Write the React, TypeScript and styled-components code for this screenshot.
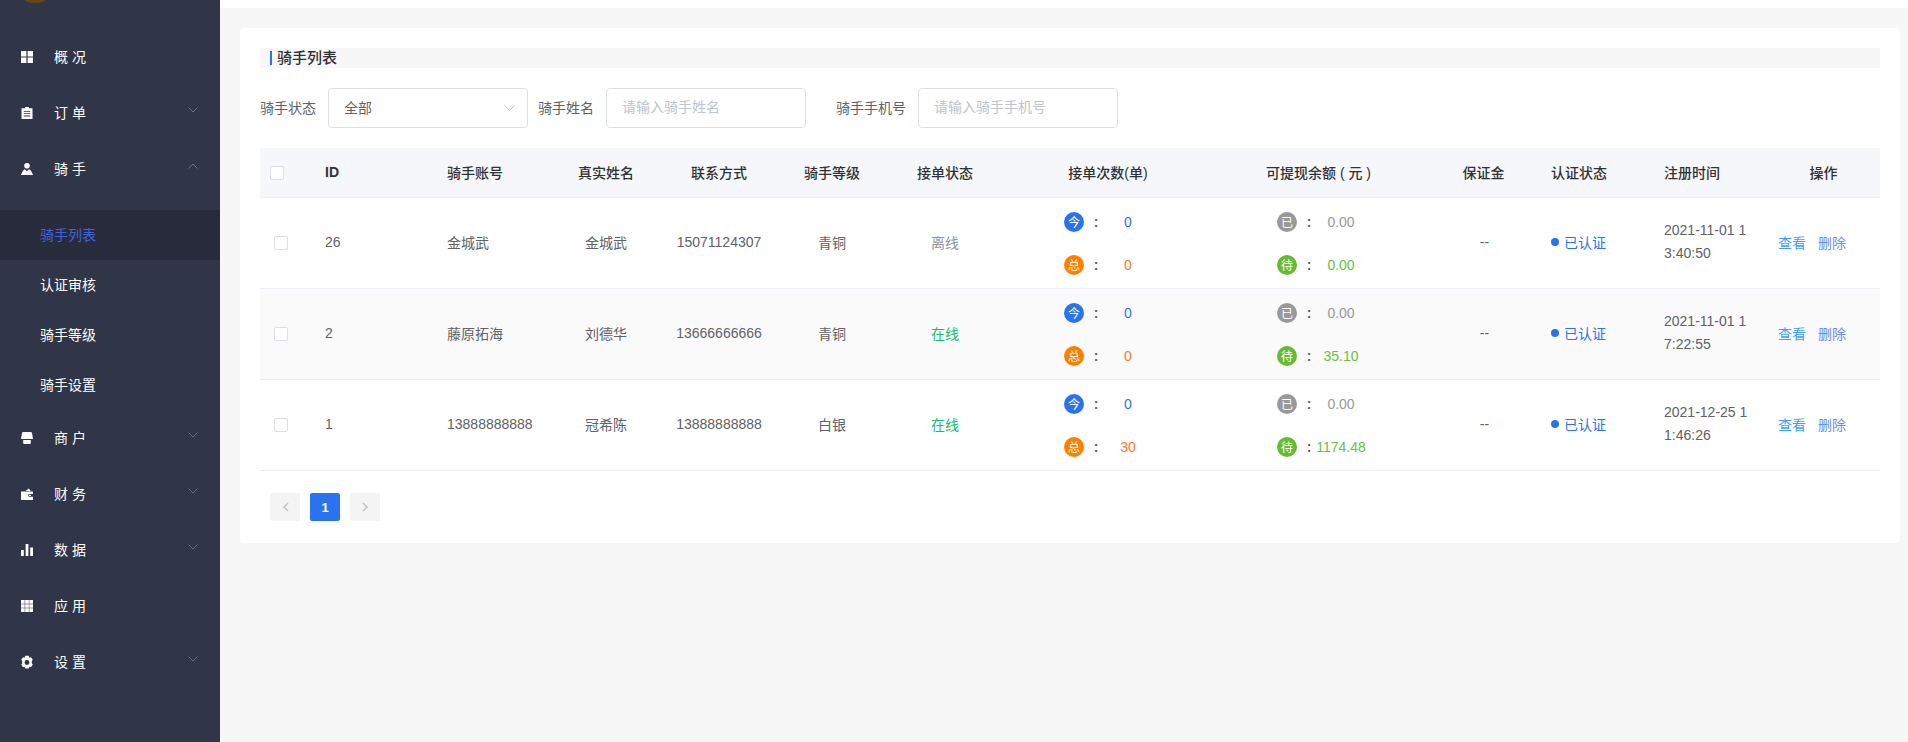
import React from 'react';
import styled, { createGlobalStyle } from 'styled-components';

const FONT = `"Liberation Sans", "Noto Sans CJK SC", sans-serif`;

const GlobalStyle = createGlobalStyle`
    html, body {
        margin: 0;
        padding: 0;
        height: 100%;
        overflow: hidden;
        background: #f7f7f7;
        font-family: ${FONT};
    }
    * {
        box-sizing: border-box;
    }
`;

const Layout = styled.div`
    display: flex;
    width: 100%;
    height: 742px;
    overflow: hidden;
`;

const Sidebar = styled.aside`
    flex: 0 0 220px;
    height: 100%;
    background-color: #303548;
    overflow: hidden;
`;

const LogoClip = styled.div`
    height: 29px;
    padding-left: 25px;
`;

const Logo = styled.div`
    width: 20px;
    height: 3px;
    border-radius: 0 0 50% 50% / 0 0 100% 100%;
    background-color: #65490f;
`;

const MenuItem = styled.div`
    height: 56px;
    padding: 0 22px 0 21px;
    display: flex;
    align-items: center;
    color: #ffffff;
    font-size: 14px;
`;

const MenuIcon = styled.svg`
    flex: 0 0 12px;
    width: 12px;
    height: 12px;
    margin-right: 21px;
    overflow: visible;
    fill: #ffffff;
`;

const MenuLabel = styled.span`
    flex: 1;
    padding-bottom: 2px;
`;

const Chevron = styled.svg<{ $open?: boolean }>`
    width: 10px;
    height: 6px;
    margin-top: -6px;
    fill: none;
    stroke: #6c7080;
    stroke-width: 1;
    transform: ${(props) => (props.$open ? 'rotate(180deg)' : 'none')};
`;

const SubMenu = styled.div`
    padding-top: 13px;
`;

const SubItem = styled.div<{ $active?: boolean }>`
    height: 50px;
    padding: 0 0 2px 40px;
    display: flex;
    align-items: center;
    font-size: 14px;
    color: ${(props) => (props.$active ? '#3f63d8' : '#ffffff')};
    background-color: ${(props) => (props.$active ? '#282b3b' : 'transparent')};
`;

const Main = styled.main`
    flex: 1;
    min-width: 0;
`;

const TopBar = styled.div`
    height: 8px;
    background-color: #ffffff;
`;

const Content = styled.div`
    padding: 20px 8px 0 20px;
`;

const Card = styled.section`
    background-color: #ffffff;
    border-radius: 4px;
    padding: 20px 20px 22px;
`;

const TitleBar = styled.div`
    height: 20px;
    padding-left: 10px;
    margin-bottom: 20px;
    display: flex;
    align-items: center;
    background-color: #f7f7f7;
`;

const TitleText = styled.h4`
    margin: 0;
    padding-left: 5px;
    border-left: 2px solid #2a73ee;
    height: 14px;
    font-size: 15px;
    line-height: 14px;
    font-weight: 500;
    color: #303133;
`;

const FilterRow = styled.div`
    height: 40px;
    margin-bottom: 20px;
    display: flex;
    align-items: center;
`;

const FilterLabel = styled.label<{ $gap?: number }>`
    margin-left: ${(props) => props.$gap ?? 0}px;
    margin-right: 12px;
    padding-bottom: 2px;
    font-size: 14px;
    color: #606266;
`;

const SelectBox = styled.div`
    width: 200px;
    height: 40px;
    padding: 0 12px 2px 15px;
    display: flex;
    align-items: center;
    justify-content: space-between;
    border: 1px solid #dcdfe6;
    border-radius: 4px;
    font-size: 14px;
    color: #606266;
`;

const SelectArrow = styled.svg`
    width: 11px;
    height: 7px;
    margin-top: 2px;
    fill: none;
    stroke: #c0c4cc;
    stroke-width: 1;
`;

const TextInput = styled.input`
    width: 200px;
    height: 40px;
    padding: 0 15px 2px;
    border: 1px solid #dcdfe6;
    border-radius: 4px;
    outline: none;
    font-family: ${FONT};
    font-size: 14px;
    color: #606266;

    &::placeholder {
        color: #c0c4cc;
    }
`;

const Table = styled.table`
    width: 1620px;
    table-layout: fixed;
    border-collapse: separate;
    border-spacing: 0;
    font-size: 14px;
    color: #606266;
`;

const HeadCell = styled.th<{ $left?: boolean; $nudge?: number }>`
    box-sizing: border-box;
    height: 50px;
    padding: 0 ${(props) => 10 + (props.$nudge ?? 0)}px 2px 10px;
    background-color: #f5f7fa;
    border-bottom: 1px solid #ebeef5;
    text-align: ${(props) => (props.$left ? 'left' : 'center')};
    font-size: 14px;
    font-weight: 500;
    color: #303133;
`;

const CheckHeadCell = styled(HeadCell)`
    padding-bottom: 0;
`;

const Row = styled.tr<{ $striped?: boolean }>`
    background-color: ${(props) => (props.$striped ? '#fafafa' : '#ffffff')};
`;

const Cell = styled.td<{ $left?: boolean }>`
    box-sizing: border-box;
    height: 91px;
    padding: 0 10px 2px;
    border-bottom: 1px solid #ebeef5;
    text-align: ${(props) => (props.$left ? 'left' : 'center')};
`;

const StatCell = styled(Cell)`
    padding-bottom: 0;
`;

const BondCell = styled(Cell)`
    padding-left: 12px;
`;

const IdText = styled.span`
    font-weight: 700;
`;

const CheckBox = styled.span<{ $inset?: boolean }>`
    display: block;
    width: 14px;
    height: 14px;
    margin-left: ${(props) => (props.$inset ? 4 : 0)}px;
    background-color: #ffffff;
    border: 1px solid #dcdfe6;
    border-radius: 2px;
`;

const OnlineState = styled.span<{ $online: boolean }>`
    color: ${(props) => (props.$online ? '#19be6b' : '#909399')};
`;

const StatList = styled.div<{ $indent: number }>`
    display: flex;
    flex-direction: column;
    gap: 23px;
    margin-left: ${(props) => props.$indent}px;
`;

const StatLine = styled.div`
    display: flex;
    align-items: center;
    height: 20px;
`;

const Badge = styled.span<{ $color: string }>`
    flex: 0 0 20px;
    width: 20px;
    height: 20px;
    border-radius: 50%;
    display: flex;
    align-items: center;
    justify-content: center;
    font-size: 12px;
    color: #ffffff;
    background-color: ${(props) => props.$color};
`;

const Colon = styled.span`
    flex: 0 0 24px;
    text-align: center;
    font-weight: 700;
    color: #606266;
`;

const StatValue = styled.span<{ $color: string }>`
    flex: 0 0 40px;
    min-width: 0;
    display: flex;
    justify-content: center;
    white-space: nowrap;
    color: ${(props) => props.$color};
`;

const AuthState = styled.div`
    display: flex;
    align-items: center;
    color: #2a73ee;
`;

const AuthDot = styled.span`
    width: 8px;
    height: 8px;
    margin-right: 5px;
    border-radius: 50%;
    background-color: #2a73ee;
`;

const TimeText = styled.div`
    width: 86px;
    line-height: 23px;
    word-break: break-all;
`;

const Actions = styled.div`
    display: flex;
    gap: 12px;
    margin-left: 1px;
    white-space: nowrap;
`;

const ActionLink = styled.a<{ $danger?: boolean }>`
    font-size: 14px;
    color: ${(props) => (props.$danger ? '#6c8cf5' : '#409eff')};
    cursor: pointer;
`;

const Pagination = styled.div`
    padding: 22px 0 0 10px;
    display: flex;
    gap: 10px;
`;

const PageButton = styled.button<{ $active?: boolean }>`
    width: 30px;
    height: 28px;
    padding: 0;
    border: 0;
    border-radius: 2px;
    display: flex;
    align-items: center;
    justify-content: center;
    font-family: ${FONT};
    font-size: 13px;
    font-weight: 700;
    color: ${(props) => (props.$active ? '#ffffff' : '#c0c4cc')};
    background-color: ${(props) => (props.$active ? '#2a73ee' : '#f4f4f5')};
`;

const PageArrow = styled.svg`
    width: 7px;
    height: 10px;
    fill: none;
    stroke: currentColor;
    stroke-width: 1.6;
`;

const iconPaths: Record<string, React.ReactNode> = {
    grid: <path d="M0 0h5.4v5.4H0zM6.600 0H12v5.400H6.600zM0 6.600h5.400V12H0zM6.600 6.600H12V12H6.600z" />,
    clipboard: (
        <path
            fillRule="evenodd"
            d="M4 0h4v1.200h3.500V12H.5V1.200H4zM2.800 4v.8h6.400V4zM2.800 6.300v.8h6.400v-.8zM2.800 8.600v.8h6.400v-.8z"
        />
    ),
    user: (
        <path d="M6 0a2.800 2.800 0 1 1 0 5.600A2.800 2.800 0 0 1 6 0zM3.800 6.200 6 8.200l2.200-2c1.400.6 2.600 2.400 3.800 5.800H0c1.200-3.400 2.400-5.200 3.800-5.800z" />
    ),
    store: (
        <path d="M2.400 0h7.200c.8 0 1.400.6 1.500 1.400L12 7H0l.9-5.600C1 .6 1.600 0 2.400 0zM2.200 8h7.600v3a1 1 0 0 1-1 1H3.200a1 1 0 0 1-1-1z" />
    ),
    wallet: (
        <path
            fillRule="evenodd"
            d="M7.800.5 9.800 3H4.600zM0 3.500h12V6H8.500a1.400 1.400 0 0 0 0 2.800H12V12H0zM8.500 6.800a.6.600 0 0 0 0 1.200h1a.6.600 0 0 0 0-1.200z"
        />
    ),
    bars: <path d="M0 6h2.800v6H0zM4.600 0h2.800v12H4.600zM9.200 3.500H12V12H9.200z" />,
    table: (
        <path d="M0 0h3.700v3.700H0zM4.150 0h3.700v3.700h-3.700zM8.300 0H12v3.700H8.300zM0 4.150h3.700v3.700H0zM4.150 4.150h3.700v3.700h-3.700zM8.300 4.150H12v3.700H8.300zM0 8.300h3.700V12H0zM4.150 8.300h3.700V12h-3.700zM8.300 8.300H12V12H8.300z" />
    ),
    gear: (
        <path
            fillRule="evenodd"
            d="M4.300-.8h3.400l.4 1.700 1.500-.5 1.700 2.400-1 1.200c.2.600.2 1.400 0 2l1 1.200-1.700 2.400-1.500-.5-.4 1.700H4.300l-.4-1.700-1.500.5L.7 7.200l1-1.200c-.2-.6-.2-1.400 0-2l-1-1.200L2.400.4l1.500.5zM6 3.100a2.200 2.200 0 1 0 0 4.400 2.200 2.200 0 0 0 0-4.400z"
            transform="translate(-.6 .7) scale(1.1)"
        />
    ),
};

const downChevron = <path d="M.5.5 5 5 9.500.5" />;

function SideMenu({ icon, label, arrow, open }: { icon: string; label: string; arrow?: boolean; open?: boolean }) {
    return (
        <MenuItem>
            <MenuIcon viewBox="0 0 12 12">{iconPaths[icon]}</MenuIcon>
            <MenuLabel>{label}</MenuLabel>
            {arrow && (
                <Chevron viewBox="0 0 10 6" $open={open}>
                    {downChevron}
                </Chevron>
            )}
        </MenuItem>
    );
}

const columnWidths = [55, 122, 113, 112, 114, 112, 114, 212, 212, 115, 113, 113, 113];

const headers = [
    { text: 'ID', left: true },
    { text: '骑手账号', left: true },
    { text: '真实姓名' },
    { text: '联系方式' },
    { text: '骑手等级' },
    { text: '接单状态' },
    { text: '接单次数(单)' },
    { text: '可提现余额 ( 元 )', nudge: 3 },
    { text: '保证金' },
    { text: '认证状态', left: true },
    { text: '注册时间', left: true },
    { text: '操作' },
];

const riders = [
    {
        id: '26',
        account: '金城武',
        name: '金城武',
        phone: '15071124307',
        level: '青铜',
        online: false,
        today: '0',
        total: '0',
        paid: '0.00',
        pending: '0.00',
        time: '2021-11-01 13:40:50',
    },
    {
        id: '2',
        account: '藤原拓海',
        name: '刘德华',
        phone: '13666666666',
        level: '青铜',
        online: true,
        today: '0',
        total: '0',
        paid: '0.00',
        pending: '35.10',
        time: '2021-11-01 17:22:55',
    },
    {
        id: '1',
        account: '13888888888',
        name: '冠希陈',
        phone: '13888888888',
        level: '白银',
        online: true,
        today: '0',
        total: '30',
        paid: '0.00',
        pending: '1174.48',
        time: '2021-12-25 11:46:26',
    },
];

function Stat({ badge, badgeColor, value, color }: { badge: string; badgeColor: string; value: string; color: string }) {
    return (
        <StatLine>
            <Badge $color={badgeColor}>{badge}</Badge>
            <Colon>:</Colon>
            <StatValue $color={color}>{value}</StatValue>
        </StatLine>
    );
}

export default function App() {
    return (
        <>
            <GlobalStyle />
            <Layout>
                <Sidebar>
                    <LogoClip>
                        <Logo />
                    </LogoClip>
                    <SideMenu icon="grid" label="概 况" />
                    <SideMenu icon="clipboard" label="订 单" arrow />
                    <SideMenu icon="user" label="骑 手" arrow open />
                    <SubMenu>
                        <SubItem $active>骑手列表</SubItem>
                        <SubItem>认证审核</SubItem>
                        <SubItem>骑手等级</SubItem>
                        <SubItem>骑手设置</SubItem>
                    </SubMenu>
                    <SideMenu icon="store" label="商 户" arrow />
                    <SideMenu icon="wallet" label="财 务" arrow />
                    <SideMenu icon="bars" label="数 据" arrow />
                    <SideMenu icon="table" label="应 用" />
                    <SideMenu icon="gear" label="设 置" arrow />
                </Sidebar>
                <Main>
                    <TopBar />
                    <Content>
                        <Card>
                            <TitleBar>
                                <TitleText>骑手列表</TitleText>
                            </TitleBar>
                            <FilterRow>
                                <FilterLabel>骑手状态</FilterLabel>
                                <SelectBox>
                                    全部
                                    <SelectArrow viewBox="0 0 11 7">
                                        <path d="M.5.5 5.500 5.500 10.500.5" />
                                    </SelectArrow>
                                </SelectBox>
                                <FilterLabel $gap={10}>骑手姓名</FilterLabel>
                                <TextInput placeholder="请输入骑手姓名" />
                                <FilterLabel $gap={30}>骑手手机号</FilterLabel>
                                <TextInput placeholder="请输入骑手手机号" />
                            </FilterRow>
                            <Table>
                                <colgroup>
                                    {columnWidths.map((width, index) => (
                                        <col key={index} width={width} />
                                    ))}
                                </colgroup>
                                <thead>
                                    <tr>
                                        <CheckHeadCell>
                                            <CheckBox />
                                        </CheckHeadCell>
                                        {headers.map((header) => (
                                            <HeadCell key={header.text} $left={header.left} $nudge={header.nudge}>
                                                {header.text === 'ID' ? <IdText>ID</IdText> : header.text}
                                            </HeadCell>
                                        ))}
                                    </tr>
                                </thead>
                                <tbody>
                                    {riders.map((rider, index) => (
                                        <Row key={rider.id} $striped={index === 1}>
                                            <StatCell>
                                                <CheckBox $inset />
                                            </StatCell>
                                            <Cell $left>{rider.id}</Cell>
                                            <Cell $left>{rider.account}</Cell>
                                            <Cell>{rider.name}</Cell>
                                            <Cell>{rider.phone}</Cell>
                                            <Cell>{rider.level}</Cell>
                                            <Cell>
                                                <OnlineState $online={rider.online}>
                                                    {rider.online ? '在线' : '离线'}
                                                </OnlineState>
                                            </Cell>
                                            <StatCell $left>
                                                <StatList $indent={52}>
                                                    <Stat badge="今" badgeColor="#2a73ee" value={rider.today} color="#2a73ee" />
                                                    <Stat badge="总" badgeColor="#ff8000" value={rider.total} color="#ff7a2e" />
                                                </StatList>
                                            </StatCell>
                                            <StatCell $left>
                                                <StatList $indent={53}>
                                                    <Stat badge="已" badgeColor="#999999" value={rider.paid} color="#999999" />
                                                    <Stat badge="待" badgeColor="#67bb33" value={rider.pending} color="#67c23a" />
                                                </StatList>
                                            </StatCell>
                                            <BondCell>--</BondCell>
                                            <Cell $left>
                                                <AuthState>
                                                    <AuthDot />
                                                    已认证
                                                </AuthState>
                                            </Cell>
                                            <Cell $left>
                                                <TimeText>{rider.time}</TimeText>
                                            </Cell>
                                            <Cell $left>
                                                <Actions>
                                                    <ActionLink>查看</ActionLink>
                                                    <ActionLink $danger>删除</ActionLink>
                                                </Actions>
                                            </Cell>
                                        </Row>
                                    ))}
                                </tbody>
                            </Table>
                            <Pagination>
                                <PageButton aria-label="prev">
                                    <PageArrow viewBox="0 0 7 10">
                                        <path d="M6 1 2 5l4 4" />
                                    </PageArrow>
                                </PageButton>
                                <PageButton $active>1</PageButton>
                                <PageButton aria-label="next">
                                    <PageArrow viewBox="0 0 7 10">
                                        <path d="M1 1l4 4-4 4" />
                                    </PageArrow>
                                </PageButton>
                            </Pagination>
                        </Card>
                    </Content>
                </Main>
            </Layout>
        </>
    );
}
